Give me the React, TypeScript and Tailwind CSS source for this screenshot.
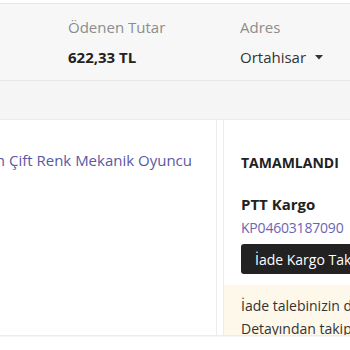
import React from 'react'

const font = { fontFamily: '"Open Sans", "Noto Sans", sans-serif' }

function SummaryBar() {
  return (
    <div className="mt-[3px] h-[78px] border-y border-[#e6e6e6] bg-[#f7f7f7] flex pl-[68px] pt-[12px]">
      <div className="w-[172px] shrink-0">
        <div className="text-[15px] leading-[22px] text-[#8c8c8c]">Ödenen Tutar</div>
        <div className="mt-[8px] text-[15px] leading-[22px] font-bold text-[#222]">622,33 TL</div>
      </div>
      <div className="shrink-0">
        <div className="text-[15px] leading-[22px] text-[#8c8c8c]">Adres</div>
        <div className="mt-[8px] flex items-center text-[15px] leading-[22px] text-[#333]">
          Ortahisar
          <svg width="8" height="5" viewBox="0 0 8 5" className="ml-[9px] mt-[1px]">
            <path d="M0 0h8L4 4.5z" fill="#333" />
          </svg>
        </div>
      </div>
    </div>
  )
}

function OrderRow() {
  return (
    <div className="mt-[38px] border-y border-[#ececec] bg-white flex h-[217px]">
      <div className="w-[217px] shrink-0 border-r border-[#ececec] overflow-hidden flex justify-end pr-[24px] pt-[29px]">
        <span className="whitespace-nowrap text-[15px] leading-[22px] text-[#5b57a3]">
          Gaming Klavye Blue Switch Çift Renk Mekanik Oyuncu
        </span>
      </div>
      <div className="ml-[6px] flex-1 border-l border-[#ececec] flex flex-col overflow-hidden">
        <div className="pl-[17px] pt-[33px] pb-[11px]">
          <div className="text-[14px] leading-[20px] font-bold text-[#222]">TAMAMLANDI</div>
          <div className="mt-[21px] text-[15px] leading-[21px] font-bold text-[#222]">PTT Kargo</div>
          <div className="mt-[2px] text-[14px] leading-[21px] tracking-[-0.2px] text-[#6d64b0]">KP04603187090</div>
          <button className="mt-[6px] h-[30px] rounded-[3px] bg-[#222] px-[14px] text-[14px] text-white whitespace-nowrap">
            İade Kargo Takip Et
          </button>
        </div>
        <div className="flex-1 bg-[#fdf8ea] pl-[17px] pt-[9px] text-[14px] leading-[23px] text-[#333] whitespace-nowrap">
          <div>İade talebinizin durumunu</div>
          <div>Detayından takip edebilirsiniz.</div>
        </div>
      </div>
    </div>
  )
}

export default function App() {
  return (
    <div className="w-[350px] h-[350px] overflow-hidden bg-white" style={font}>
      <div className="bg-[#f5f5f5] pb-px">
        <div className="bg-white">
          <SummaryBar />
        </div>
        <OrderRow />
      </div>
    </div>
  )
}
